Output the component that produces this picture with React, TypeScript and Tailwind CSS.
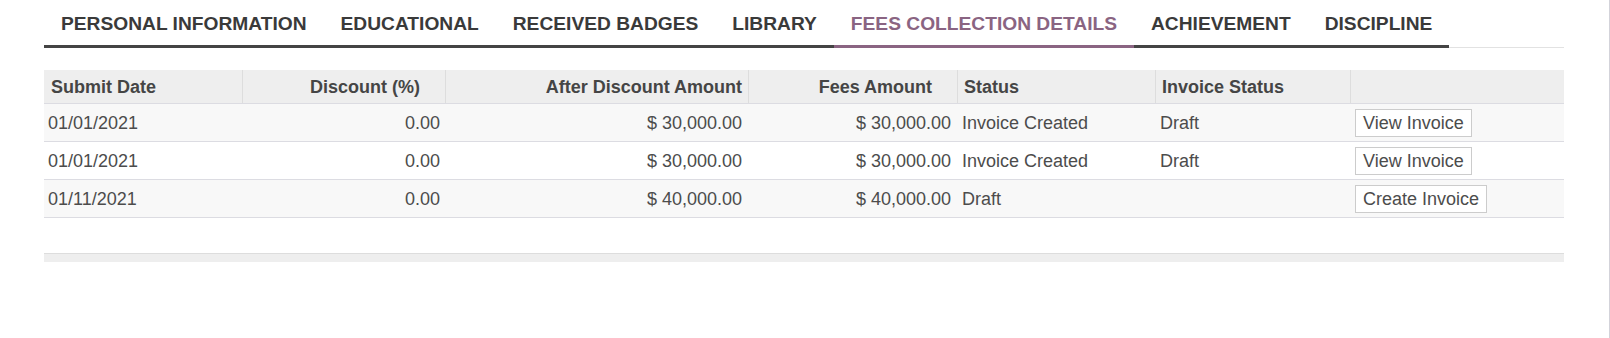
const tabs = [
  "PERSONAL INFORMATION",
  "EDUCATIONAL",
  "RECEIVED BADGES",
  "LIBRARY",
  "FEES COLLECTION DETAILS",
  "ACHIEVEMENT",
  "DISCIPLINE",
];

const rows = [
  { date: "01/01/2021", discount: "0.00", after: "$ 30,000.00", fees: "$ 30,000.00", status: "Invoice Created", invoice: "Draft", action: "View Invoice" },
  { date: "01/01/2021", discount: "0.00", after: "$ 30,000.00", fees: "$ 30,000.00", status: "Invoice Created", invoice: "Draft", action: "View Invoice" },
  { date: "01/11/2021", discount: "0.00", after: "$ 40,000.00", fees: "$ 40,000.00", status: "Draft", invoice: "", action: "Create Invoice" },
];

const cols = "grid grid-cols-[198px_203px_303px_209px_198px_195px_214px]";

export default function App() {
  return (
    <div className="h-[338px] w-[1610px] border-r border-[#d3d3da] bg-white pl-[44px] pr-[45px] font-['Liberation_Sans',Arial,sans-serif]">
      {/* Tabs */}
      <ul className="flex border-b border-[#e2e2e2]">
        {tabs.map((t) => {
          const active = t === "FEES COLLECTION DETAILS";
          return (
            <li
              key={t}
              className={
                active
                  ? "-mb-px border-b-[3px] border-[#8a6482] px-[17px] pt-[13px] pb-[10px] text-[19.2px] leading-[22px] font-bold text-[#8a6482]"
                  : "-mb-px border-b-[3px] border-[#444444] px-[17px] pt-[13px] pb-[10px] text-[19.2px] leading-[22px] font-bold text-[#3a3a3a]"
              }
            >
              {t}
            </li>
          );
        })}
      </ul>

      {/* Table */}
      <div className="mt-[22px] text-[18px] leading-[22px] text-[#4c4c4c]">
        <div className={`${cols} h-[34px] border-b border-[#dcdce2] bg-[#eeeeee] font-bold text-[#454545]`}>
          <div className="flex items-center pl-[7px]">Submit Date</div>
          <div className="flex items-center justify-end border-l border-[#dddddd] pr-[25px]">Discount (%)</div>
          <div className="flex items-center justify-end border-l border-[#dddddd] pr-[6px]">After Discount Amount</div>
          <div className="flex items-center justify-end border-l border-[#dddddd] pr-[25px]">Fees Amount</div>
          <div className="flex items-center border-l border-[#dddddd] pl-[6px]">Status</div>
          <div className="flex items-center border-l border-[#dddddd] pl-[6px]">Invoice Status</div>
          <div className="border-l border-[#dddddd]" />
        </div>
        {rows.map((r, i) => (
          <div
            key={i}
            className={`${cols} h-[38px] border-b border-[#dcdce2] ${i % 2 === 0 ? "bg-[#f8f8f8]" : "bg-white"}`}
          >
            <div className="flex items-center pl-[4px]">{r.date}</div>
            <div className="flex items-center justify-end pr-[5px]">{r.discount}</div>
            <div className="flex items-center justify-end pr-[6px]">{r.after}</div>
            <div className="flex items-center justify-end pr-[6px]">{r.fees}</div>
            <div className="flex items-center pl-[5px]">{r.status}</div>
            <div className="flex items-center pl-[5px]">{r.invoice}</div>
            <div className="flex items-center pl-[5px]">
              <button className="h-[28px] border border-[#cccccc] bg-white px-[7px] text-[18px] leading-[22px] text-[#4c4c4c]">
                {r.action}
              </button>
            </div>
          </div>
        ))}
      </div>

      {/* Footer bar */}
      <div className="mt-[35px] h-[9px] border-t border-[#dddddd] bg-[#eeeeee]" />
    </div>
  );
}
